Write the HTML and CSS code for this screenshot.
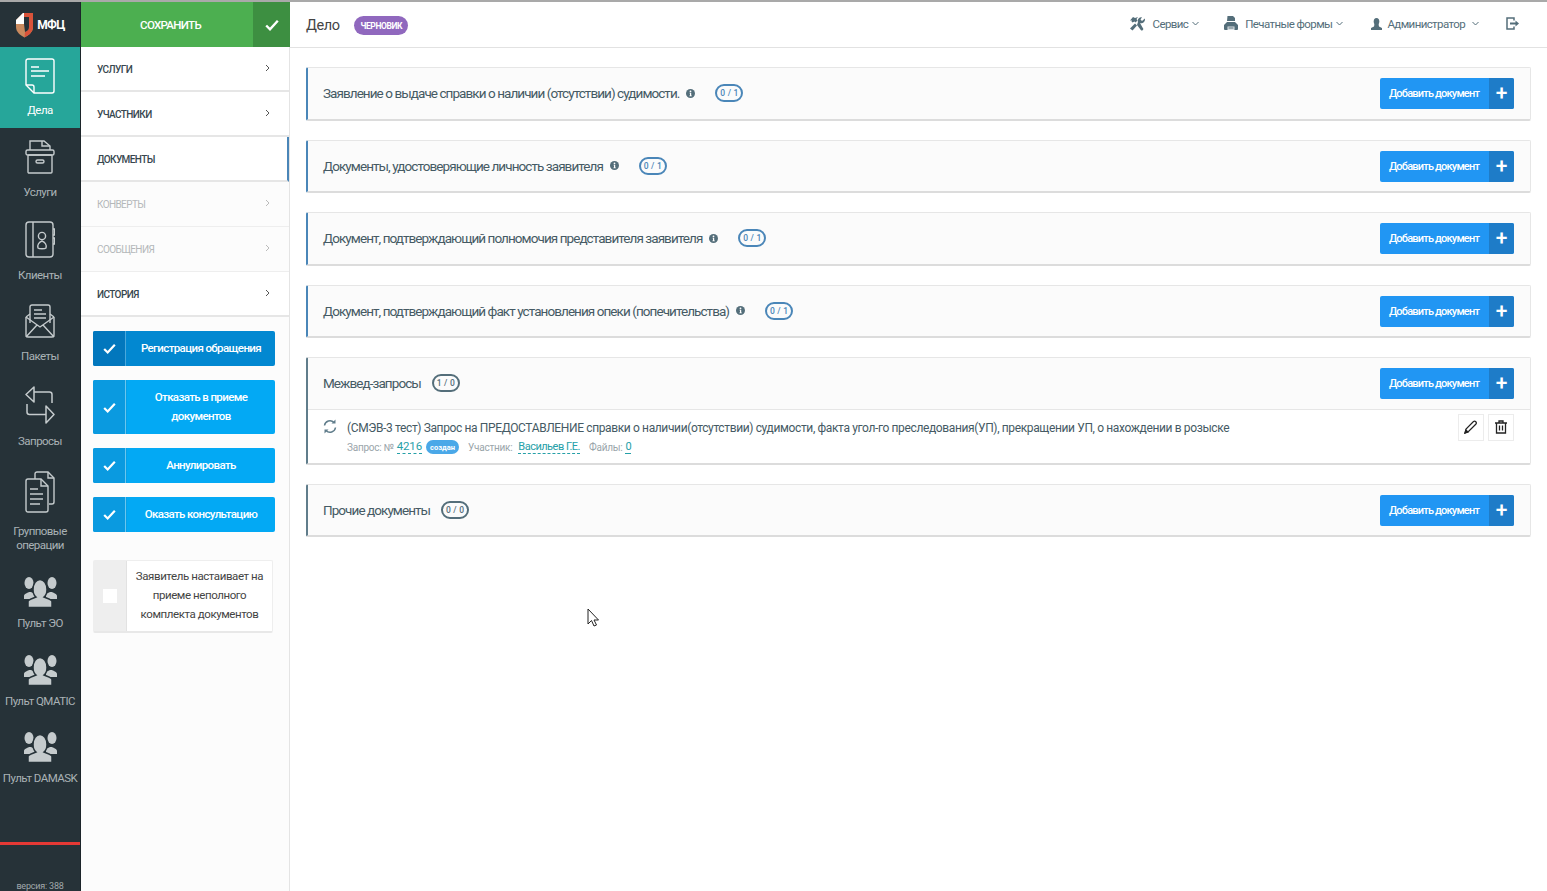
FILE: index.html
```html
<!DOCTYPE html>
<html lang="ru">
<head>
<meta charset="utf-8">
<title>Дело</title>
<link rel="stylesheet" href="styles.css">
</head>
<body>
<div class="app">
  <nav class="rail">
    <div class="logo">
      <svg width="17" height="26" viewBox="0 0 17 26"><path d="M0 8L7 1h10v14c0 5-4 8-8.500 10.500C4 23 0 20 0 15z" fill="#c98a5e"/><path d="M8 1h9v14c0 5-4 8-8.500 10.500L9 20c3-1 4-3 4-5V5H8z" fill="#d9533a"/><path d="M0 8L7 1h1v11H0z" fill="#fff"/><path d="M8 5h5v10c0 2-1 4-4 5l-1-8z" fill="#263238"/></svg>
      <span>МФЦ</span>
    </div>
    <a class="rail-item active first">
      <svg width="30" height="36" viewBox="0 0 30 36" fill="none" stroke="#fff" stroke-width="1.4"><path d="M9 35h18a2 2 0 0 0 2-2V3a2 2 0 0 0-2-2H3a2 2 0 0 0-2 2v24z"/><path d="M1 27h6a2 2 0 0 1 2 2v6"/><path d="M6 9h8M6 13h18M6 18h14"/></svg>
      <span>Дела</span>
    </a>
    <a class="rail-item">
      <svg width="30" height="36" viewBox="0 0 30 36" fill="none" stroke="#c5cbcd" stroke-width="1.4"><path d="M5 11V2h14l6 5v4"/><path d="M17 2v5h8"/><rect x="1" y="11" width="28" height="5" rx="1.5"/><rect x="3" y="16" width="24" height="18" rx="1"/><rect x="11" y="21" width="8" height="3" rx="1.5"/></svg>
      <span>Услуги</span>
    </a>
    <a class="rail-item">
      <svg width="30" height="37" viewBox="0 0 30 37" fill="none" stroke="#c5cbcd" stroke-width="1.4"><rect x="1" y="1" width="27" height="35" rx="3"/><path d="M8 1v35M28 8h1.5v6H28M28 17h1.5v6H28"/><circle cx="17" cy="15" r="3.6"/><path d="M13 27c-1-3 1-6 4-7 3 1 5 4 4 7-1 1-7 1-8 0z"/></svg>
      <span>Клиенты</span>
    </a>
    <a class="rail-item">
      <svg width="30" height="34" viewBox="0 0 30 34" fill="none" stroke="#c5cbcd" stroke-width="1.4"><path d="M1 13l4-3M29 13l-4-3M1 13v18a2 2 0 0 0 2 2h24a2 2 0 0 0 2-2V13"/><path d="M5 19V3a2 2 0 0 1 2-2h16a2 2 0 0 1 2 2v16"/><path d="M9 6h8M9 10h12M9 14h12"/><path d="M1 13l14 10 14-10M1 33l11-12M29 33L18 21"/></svg>
      <span>Пакеты</span>
    </a>
    <a class="rail-item">
      <svg width="30" height="38" viewBox="0 0 30 38" fill="none" stroke="#c5cbcd" stroke-width="1.500" stroke-linejoin="round"><path d="M9 1L1 8.500 9 16z"/><path d="M9 6h15.500q2.500 0 2.500 2.500V17"/><path d="M2 18v8q0 2.500 2.500 2.500H21"/><path d="M21 20l8 8.500-8 8.500z"/></svg>
      <span>Запросы</span>
    </a>
    <a class="rail-item tall">
      <svg width="30" height="42" viewBox="0 0 30 42" fill="none" stroke="#c5cbcd" stroke-width="1.4"><path d="M10 8V3a2 2 0 0 1 2-2h11l6 6v24a2 2 0 0 1-2 2h-3"/><path d="M23 1v6h6"/><path d="M3 8h13l7 7v24a2 2 0 0 1-2 2H3a2 2 0 0 1-2-2V10a2 2 0 0 1 2-2z"/><path d="M16 8v7h7M5 18h8M5 23h13M5 28h13M5 33h10"/></svg>
      <span>Групповые операции</span>
    </a>
    <a class="rail-item pult">
      <svg width="37" height="30" viewBox="0 0 37 30"><use href="#people"/></svg>
      <span>Пульт ЭО</span>
    </a>
    <a class="rail-item pult">
      <svg width="37" height="30" viewBox="0 0 37 30"><use href="#people"/></svg>
      <span>Пульт QMATIC</span>
    </a>
    <a class="rail-item pult">
      <svg width="37" height="30" viewBox="0 0 37 30"><use href="#people"/></svg>
      <span>Пульт DAMASK</span>
    </a>
    <div class="rail-bottom">
      <div class="red-line"></div>
      <div class="version">версия: 388</div>
    </div>
  </nav>

  <aside class="side">
    <div class="save">
      <span class="save-label">СОХРАНИТЬ</span>
      <span class="save-check"><svg width="14" height="12" viewBox="0 0 14 12"><use href="#check"/></svg></span>
    </div>
    <ul class="menu">
      <li class="menu-row"><span>УСЛУГИ</span><svg class="chev" width="5" height="8" viewBox="0 0 5 8"><path d="M1 1l3 3-3 3"/></svg></li>
      <li class="menu-row"><span>УЧАСТНИКИ</span><svg class="chev" width="5" height="8" viewBox="0 0 5 8"><path d="M1 1l3 3-3 3"/></svg></li>
      <li class="menu-row current"><span>ДОКУМЕНТЫ</span></li>
      <li class="menu-row off"><span>КОНВЕРТЫ</span><svg class="chev" width="5" height="8" viewBox="0 0 5 8"><path d="M1 1l3 3-3 3"/></svg></li>
      <li class="menu-row off"><span>СООБЩЕНИЯ</span><svg class="chev" width="5" height="8" viewBox="0 0 5 8"><path d="M1 1l3 3-3 3"/></svg></li>
      <li class="menu-row"><span>ИСТОРИЯ</span><svg class="chev" width="5" height="8" viewBox="0 0 5 8"><path d="M1 1l3 3-3 3"/></svg></li>
    </ul>
    <div class="actions">
      <button class="act pressed"><span class="act-ico"><svg width="13" height="11" viewBox="0 0 14 12"><use href="#check"/></svg></span><span class="act-text">Регистрация обращения</span></button>
      <button class="act"><span class="act-ico"><svg width="13" height="11" viewBox="0 0 14 12"><use href="#check"/></svg></span><span class="act-text">Отказать в приеме<br>документов</span></button>
      <button class="act"><span class="act-ico"><svg width="13" height="11" viewBox="0 0 14 12"><use href="#check"/></svg></span><span class="act-text">Аннулировать</span></button>
      <button class="act"><span class="act-ico"><svg width="13" height="11" viewBox="0 0 14 12"><use href="#check"/></svg></span><span class="act-text">Оказать консультацию</span></button>
    </div>
    <div class="insist">
      <span class="insist-box"><i></i></span>
      <span class="insist-text">Заявитель настаивает на приеме неполного комплекта документов</span>
    </div>
  </aside>

  <main class="main">
    <header class="top">
      <div class="top-left"><h1>Дело</h1><span class="status">ЧЕРНОВИК</span></div>
      <div class="top-right">
        <span class="top-link tools"><svg width="16" height="15" viewBox="0 0 16 15" fill="#546e7a"><path d="M1 4.500l3-3.500 2 1 3-1-1.500 2 1 1.500-2 2-1-1-2 1-1-1 .5-1z"/><path d="M6 7.500l2 2L3.500 14.500 1 12.500z"/><path d="M15.800 2.500a3.600 3.600 0 0 1-4.800 4.400L13.800 12a1.300 1.300 0 0 1-2 2L8 9l1-3a3.600 3.600 0 0 1 4-4.800L11.500 3.500l1.500 1.500z"/></svg>Сервис<svg class="caret" width="7" height="5" viewBox="0 0 7 5"><path d="M.5 1l3 3 3-3"/></svg></span>
        <span class="top-link print"><svg width="14" height="15" viewBox="0 0 14 15" fill="#546e7a"><path d="M3.500 0h5.500l2 2v3H3z"/><path d="M3 6h8l3 3v4a1 1 0 0 1-1 1H1a1 1 0 0 1-1-1V9z"/><path d="M3.500 10.500h7v3.500h-7z" fill="#dfe4e6"/><path d="M4.500 11.500h5v1h-5z"/></svg>Печатные формы<svg class="caret" width="7" height="5" viewBox="0 0 7 5"><path d="M.5 1l3 3 3-3"/></svg></span>
        <span class="top-link admin"><svg width="11" height="12" viewBox="0 0 11 12" fill="#546e7a"><ellipse cx="5.500" cy="3.500" rx="2.800" ry="3.500"/><path d="M3.500 6h4l.5 2.500 3 1.500v2H0v-2l3-1.500z"/></svg>Администратор<svg class="caret wide" width="7" height="5" viewBox="0 0 7 5"><path d="M.5 1l3 3 3-3"/></svg></span>
        <svg class="logout" width="13" height="13" viewBox="0 0 13 13" fill="none" stroke="#546e7a" stroke-width="1.500"><path d="M8 3.500V1H1v11h7V9.500"/><path d="M4 6.500h6" stroke-width="2"/><path d="M9.500 3.500l3.500 3-3.500 3z" fill="#546e7a" stroke="none"/></svg>
      </div>
    </header>

    <section class="cards">
      <article class="card blue">
        <div class="card-head"><span class="card-title">Заявление о выдаче справки о наличии (отсутствии) судимости.</span><svg class="info" width="9" height="9" viewBox="0 0 9 9"><use href="#info"/></svg><span class="pill">0 / 1</span><button class="add"><span class="add-text">Добавить документ</span><span class="add-plus">+</span></button></div>
      </article>
      <article class="card blue">
        <div class="card-head"><span class="card-title">Документы, удостоверяющие личность заявителя</span><svg class="info" width="9" height="9" viewBox="0 0 9 9"><use href="#info"/></svg><span class="pill">0 / 1</span><button class="add"><span class="add-text">Добавить документ</span><span class="add-plus">+</span></button></div>
      </article>
      <article class="card blue">
        <div class="card-head"><span class="card-title">Документ, подтверждающий полномочия представителя заявителя</span><svg class="info" width="9" height="9" viewBox="0 0 9 9"><use href="#info"/></svg><span class="pill">0 / 1</span><button class="add"><span class="add-text">Добавить документ</span><span class="add-plus">+</span></button></div>
      </article>
      <article class="card blue">
        <div class="card-head"><span class="card-title">Документ, подтверждающий факт установления опеки (попечительства)</span><svg class="info" width="9" height="9" viewBox="0 0 9 9"><use href="#info"/></svg><span class="pill">0 / 1</span><button class="add"><span class="add-text">Добавить документ</span><span class="add-plus">+</span></button></div>
      </article>
      <article class="card grey">
        <div class="card-head"><span class="card-title">Межвед-запросы</span><span class="pill dark">1 / 0</span><button class="add"><span class="add-text">Добавить документ</span><span class="add-plus">+</span></button></div>
        <div class="req">
          <svg class="sync" width="14" height="15" viewBox="0 0 14 15" fill="none" stroke="#607d8b" stroke-width="1.500"><path d="M1.500 6.500A5.500 5.500 0 0 1 11 3.500"/><path d="M12.500 8.500A5.500 5.500 0 0 1 3 11.500"/><path d="M12.500 .5v4h-4z" fill="#607d8b" stroke="none"/><path d="M1.500 14.500v-4h4z" fill="#607d8b" stroke="none"/></svg>
          <div class="req-body">
            <div class="req-title">(СМЭВ-3 тест) Запрос на ПРЕДОСТАВЛЕНИЕ справки о наличии(отсутствии) судимости, факта угол-го преследования(УП), прекращении УП, о нахождении в розыске</div>
            <div class="req-meta"><span class="lbl">Запрос: №</span><a class="num">4216</a><span class="created">создан</span><span class="lbl gap">Участник:</span><a class="person">Васильев Г.Е.</a><span class="lbl gap">Файлы:</span><a class="files">0</a></div>
          </div>
          <div class="req-tools">
            <span class="tool"><svg width="14" height="14" viewBox="0 0 14 14" fill="none" stroke="#222" stroke-width="1.200"><path d="M1 13l1-4 7.500-7.500a1.800 1.800 0 0 1 2.500 2.500L4.500 11.500z"/><path d="M1 13l1-3 2 2z" fill="#222"/></svg></span>
            <span class="tool"><svg width="12" height="14" viewBox="0 0 12 14" fill="none" stroke="#222" stroke-width="1.300"><path d="M0 3h12" stroke-width="1.500"/><path d="M4 3V1h4v2"/><path d="M1.500 3v10h9V3"/><path d="M4.500 5.500v5M7.500 5.500v5"/></svg></span>
          </div>
        </div>
      </article>
      <article class="card grey">
        <div class="card-head"><span class="card-title">Прочие документы</span><span class="pill dark">0 / 0</span><button class="add"><span class="add-text">Добавить документ</span><span class="add-plus">+</span></button></div>
      </article>
    </section>
  </main>
</div>

<svg class="cursor" width="12" height="19" viewBox="0 0 12 19"><path d="M1 1v15l3.500-3.500L7 18l2.500-1-2.500-5h4.500z" fill="#fff" stroke="#222" stroke-width="1"/></svg>

<svg class="defs" width="0" height="0">
  <defs>
    <g id="check"><path d="M1.200 6.500l3.800 3.800L12.800 1.800" fill="none" stroke="#fff" stroke-width="2.400"/></g>
    <g id="people" fill="#c5cbcd">
      <ellipse cx="7" cy="6" rx="4.500" ry="6"/><path d="M2 22v-3c0-2 3-3 5-4h2l4 2v5z"/>
      <ellipse cx="30" cy="6" rx="4.500" ry="6"/><path d="M35 22v-3c0-2-3-3-5-4h-2l-4 2v5z"/>
      <g stroke="#263238" stroke-width="1.500"><path d="M6 30.500v-6c0-2 5-3 8-4.500-2-1.500-3-4-3-7.500C11 7 14 2.500 18 2.500s7 4.500 7 10c0 3.500-1 6-3 7.500 3 1.500 8 2.500 8 4.500v6z"/></g>
    </g>
    <g id="info"><circle cx="4.500" cy="4.500" r="4.500" fill="#546e7a"/><path d="M3.600 3.800h1.600v2.700h.6v.8H3.400v-.8h.6V4.600h-.4z" fill="#fff"/><circle cx="4.500" cy="2.300" r=".9" fill="#fff"/></g>
  </defs>
</svg>
</body>
</html>
```
FILE: styles.css
```css
* { box-sizing: border-box; }
html, body { margin: 0; height: 100%; overflow: hidden; }
body {
  font-family: Roboto, "Liberation Sans", sans-serif;
  color: #333;
  background: #fff;
  border-top: 2px solid #a9a9a9;
}
.app { display: flex; height: 889px; }

/* left rail */
.rail {
  width: 81px;
  flex: none;
  background: #263238;
  border-right: 1px solid #1c252a;
  display: flex;
  flex-direction: column;
  color: #aab2b6;
}
.logo {
  height: 45px;
  display: flex;
  align-items: center;
  justify-content: center;
  gap: 4px;
  padding-left: 1px;
  color: #fff;
  font-weight: 700;
  font-size: 12px;
  letter-spacing: -.6px;
}
.rail-item {
  display: flex;
  flex-direction: column;
  align-items: center;
  height: 82px;
  padding-top: 11px;
  font-size: 11.500px;
  letter-spacing: -.55px;
  line-height: 14px;
  text-align: center;
}
.rail-item svg { flex: none; margin-bottom: 10px; }
.rail-item.active { background: #26a69a; color: #fff; height: 81px; }
.rail-item.active svg { margin-bottom: 9px; }
.rail-item:nth-of-type(4) { height: 82px; padding-top: 12px; }
.rail-item:nth-of-type(4) svg { margin-bottom: 11px; }
.rail-item:nth-of-type(5) { height: 84px; padding-top: 12px; }
.rail-item.tall { height: 119px; padding-top: 13px; }
.rail-item.tall svg { margin-bottom: 11px; }
.rail-item.tall span { width: 60px; }
.rail-item.pult { height: 77.500px; padding-top: 0; white-space: nowrap; }
.rail-item.pult svg { margin-bottom: 9px; }
.rail-bottom { margin-top: auto; }
.red-line { height: 3px; background: #e53935; }
.version {
  height: 46px;
  padding-top: 37px;
  text-align: center;
  font-size: 9px;
  line-height: 9px;
  color: #a0a8ab;
  letter-spacing: -.2px;
}

/* side column */
.side {
  width: 209px;
  flex: none;
  background: #fcfcfc;
  border-right: 1px solid #e4e4e4;
}
.save { height: 45px; display: flex; background: #4caf50; color: #fff; margin-right: -1px; }
.save-label {
  flex: 1;
  display: flex;
  align-items: center;
  justify-content: center;
  font-size: 11.500px;
  font-weight: 500;
  letter-spacing: -.7px;
  padding-left: 7px;
}
.save-check {
  width: 37px;
  background: #3d8f41;
  display: flex;
  align-items: center;
  justify-content: center;
}
.menu { list-style: none; margin: 0; padding: 0; }
.menu-row {
  height: 45px;
  display: flex;
  align-items: center;
  justify-content: space-between;
  padding: 2px 19px 0 16px;
  font-size: 10px;
  font-weight: 500;
  letter-spacing: -.6px;
  color: #37474f;
  border-bottom: 2px solid #e6e6e6;
  background: #fff;
}
.menu-row.current { border-right: 2px solid #4a86b8; padding-right: 17px; }
.menu-row.off { color: #b4b8ba; background: #fcfcfc; font-weight: 400; border-bottom: 1px solid #eee; padding-top: 1px; }
.chev { fill: none; stroke: #555; stroke-width: 1; margin-top: -3px; }
.off .chev { stroke: #bbb; }
.actions {
  padding: 14px 14px 0 12px;
  display: flex;
  flex-direction: column;
  gap: 14px;
}
.act {
  display: flex;
  padding: 0;
  border: 0;
  border-radius: 2px;
  overflow: hidden;
  min-height: 35px;
  background: #03a9f4;
  color: #fff;
  font-family: inherit;
  font-size: 11.500px;
  font-weight: 500;
  letter-spacing: -.62px;
  line-height: 19px;
}
.act-ico {
  width: 33px;
  flex: none;
  background: #0a9ae0;
  display: flex;
  align-items: center;
  justify-content: center;
  border-right: 1px solid #6cc6ee;
}
.act-text {
  flex: 1;
  display: flex;
  align-items: center;
  justify-content: center;
  text-align: center;
  padding: 8px 0;
  border-left: 1px solid #06a0e6;
}
.pressed { background: #0288d1; }
.pressed .act-ico { background: #0277bd; border-right-color: #4aa8dc; }
.pressed .act-text { border-left-color: #0288d1; }
.insist {
  margin: 28px 16px 0 12px;
  height: 73px;
  display: flex;
  background: #fff;
  border: 1px solid #eee;
  border-bottom: 2px solid #e8e8e8;
  border-radius: 2px;
}
.insist-box {
  width: 33px;
  flex: none;
  background: #eee;
  display: flex;
  align-items: center;
  justify-content: center;
  border-right: 1px solid #e2e2e2;
}
.insist-box i { width: 14px; height: 14px; background: #fff; }
.insist-text {
  flex: 1;
  display: flex;
  align-items: center;
  text-align: center;
  font-size: 11.500px;
  line-height: 19px;
  color: #444;
  padding: 0 8px 2px;
  letter-spacing: -.42px;
}

/* main */
.main { flex: 1; min-width: 0; display: flex; flex-direction: column; }
.top {
  height: 46px;
  flex: none;
  display: flex;
  align-items: center;
  justify-content: space-between;
  border-bottom: 1px solid #e2e2e2;
  padding: 0 28px 0 16px;
}
.top-left { display: flex; align-items: center; gap: 15px; padding-top: 2px; }
h1 { margin: 0; font-size: 14.500px; font-weight: 400; color: #444; letter-spacing: -.45px; }
.status {
  background: #9068be;
  color: #fff;
  font-size: 8.500px;
  font-weight: 700;
  letter-spacing: -.4px;
  height: 19px;
  padding: 0 6px;
  border-radius: 10px;
  display: flex;
  align-items: center;
}
.top-right { display: flex; align-items: center; padding-bottom: 2px; }
.top-link { display: flex; align-items: center; font-size: 11.500px; color: #546e7a; letter-spacing: -.6px; white-space: nowrap; }
.top-link svg:first-child { margin-right: 8px; }
.top-link.tools { margin-right: 25px; }
.top-link.print { margin-right: 28px; }
.top-link.print svg:first-child { margin-right: 7px; }
.top-link.admin svg:first-child { margin-right: 5px; }
.caret { margin-left: 4px; fill: none; stroke: #546e7a; stroke-width: 1; }
.caret.wide { margin-left: 7px; }
.logout { margin-left: 27px; }

.cards {
  padding: 19px 16px 0 16px;
  display: flex;
  flex-direction: column;
  gap: 19px;
}
.card {
  background: #fff;
  border: 1px solid #e6e6e6;
  border-bottom: 2px solid #dcdcdc;
  border-radius: 2px;
}
.card.blue { border-left: 2px solid #4a86b8; }
.card.grey { border-left: 2px solid #607d8b; }
.card-head {
  height: 50.500px;
  display: flex;
  align-items: center;
  padding: 0 16px 0 15px;
  background: #fbfbfb;
}
.card-title { font-size: 13.500px; color: #455a64; letter-spacing: -.93px; white-space: nowrap; }
.info { margin-left: 7px; flex: none; }
.pill {
  margin-left: 20px;
  height: 18px;
  width: 28px;
  border: 2px solid #4a86b8;
  border-radius: 9px;
  display: flex;
  align-items: center;
  justify-content: center;
  font-size: 8.500px;
  color: #4a86b8;
  letter-spacing: .2px;
  font-weight: 500;
  white-space: nowrap;
}
.pill.dark { border-color: #546e7a; color: #546e7a; margin-left: 11px; }
.add {
  margin: 1px 0 0 auto;
  height: 31px;
  width: 134px;
  padding: 0;
  border: 0;
  border-radius: 2px;
  overflow: hidden;
  display: flex;
  background: #2196f3;
  color: #fff;
  font-family: inherit;
  flex: none;
}
.add-text {
  flex: 1;
  display: flex;
  align-items: center;
  justify-content: center;
  font-size: 11px;
  font-weight: 500;
  letter-spacing: -.8px;
  white-space: nowrap;
  padding-right: 1px;
}
.add-plus {
  width: 25px;
  background: #1e7cc8;
  display: flex;
  align-items: center;
  justify-content: center;
  font-size: 21px;
  font-weight: 500;
  line-height: 1;
}
.req {
  display: flex;
  border-top: 1px solid #e6e6e6;
  padding: 9px 16px 0 15px;
  height: 54px;
}
.sync { flex: none; margin: 0 10px 0 0; }
.req-body { flex: 1; min-width: 0; }
.req-title { font-size: 12px; color: #455a64; letter-spacing: -.37px; line-height: 18px; white-space: nowrap; }
.req-meta { display: flex; align-items: center; font-size: 10px; color: #9aa5aa; height: 19px; margin-top: 1px; white-space: nowrap; }
.lbl { letter-spacing: -.25px; }
.req-meta a { color: #26a0a8; font-size: 11px; border-bottom: 1px dashed #26a0a8; line-height: 13px; letter-spacing: -.5px; }
.req-meta .num { margin-left: 3px; font-size: 11.500px; letter-spacing: -.1px; }
.created {
  background: #4aa8e8;
  color: #fff;
  font-size: 7.500px;
  font-weight: 700;
  height: 14px;
  padding: 0 4px;
  border-radius: 7px;
  margin-left: 4px;
  display: flex;
  align-items: center;
}
.gap { margin-left: 9px; }
.person { margin-left: 6px; }
.files { margin-left: 3px; }
.req-tools { display: flex; gap: 4px; margin-top: -5px; height: 27px; }
.tool {
  width: 26px;
  height: 27px;
  border: 1px solid #ececec;
  display: flex;
  align-items: center;
  justify-content: center;
  background: #fff;
}

.cursor { position: absolute; left: 587px; top: 608px; }
.defs { position: absolute; }
```
